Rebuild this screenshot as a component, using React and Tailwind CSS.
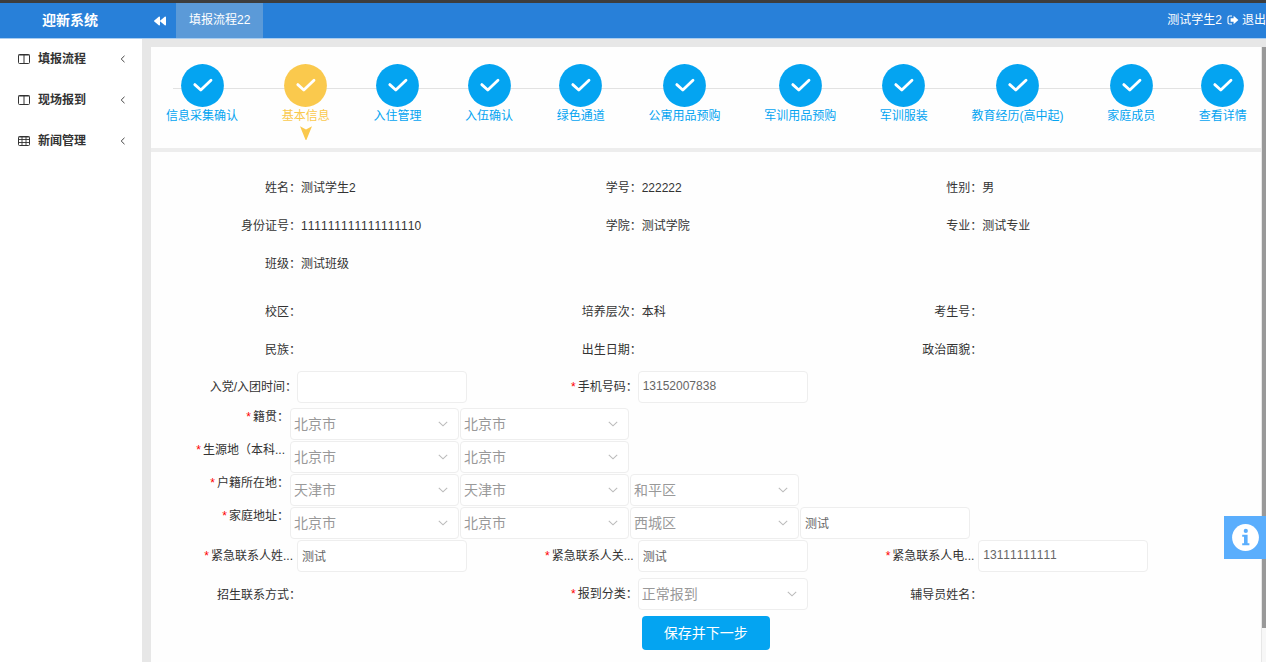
import { FaBackward } from "react-icons/fa";

const MENU = [
  { title: "填报流程", icon: ColumnsIcon },
  { title: "现场报到", icon: ColumnsIcon },
  { title: "新闻管理", icon: TableIcon },
];

const STEPS = [
  "信息采集确认",
  "基本信息",
  "入住管理",
  "入伍确认",
  "绿色通道",
  "公寓用品预购",
  "军训用品预购",
  "军训服装",
  "教育经历(高中起)",
  "家庭成员",
  "查看详情",
];
const CURRENT_STEP = 1;

const BASIC_INFO = [
  ["姓名", "测试学生2"],
  ["学号", "222222"],
  ["性别", "男"],
  ["身份证号", "111111111111111110"],
  ["学院", "测试学院"],
  ["专业", "测试专业"],
  ["班级", "测试班级"],
];

const EXTRA_INFO = [
  ["校区", ""],
  ["培养层次", "本科"],
  ["考生号", ""],
  ["民族", ""],
  ["出生日期", ""],
  ["政治面貌", ""],
];

const REGIONS = [
  { id: "native", label: "籍贯：", values: ["北京市", "北京市"] },
  { id: "origin", label: "生源地（本科...", values: ["北京市", "北京市"], cut: true },
  { id: "household", label: "户籍所在地：", values: ["天津市", "天津市", "和平区"] },
  { id: "home", label: "家庭地址：", values: ["北京市", "北京市", "西城区"], detail: "测试" },
];

function ColumnsIcon() {
  return (
    <svg viewBox="0 0 12 12" className="h-3 w-3 shrink-0" fill="none" stroke="#333" aria-hidden="true">
      <rect x="0.5" y="1.5" width="11" height="9" rx="1" />
      <path d="M0.5 2h11M6 1.5v9" />
    </svg>
  );
}

function TableIcon() {
  return (
    <svg viewBox="0 0 12 12" className="h-3 w-3 shrink-0" fill="none" stroke="#333" aria-hidden="true">
      <rect x="0.5" y="1.5" width="11" height="9" rx="1" />
      <path d="M0.5 2h11M0.5 4.5h11M0.5 7.5h11M4 1.5v9M8 1.5v9" strokeWidth="0.9" />
    </svg>
  );
}

function SignOutIcon() {
  return (
    <svg viewBox="0 0 12 12" className="h-3 w-3" aria-hidden="true">
      <path d="M5 2H2.6Q1 2 1 3.6v4.8Q1 10 2.6 10H5" fill="none" stroke="#fff" strokeWidth="1.1" />
      <path d="M3.6 4.2h3V1.8L11.4 6l-4.8 4.2V7.8h-3z" fill="#fff" />
    </svg>
  );
}

function InfoIcon() {
  return (
    <svg viewBox="0 0 27 27" className="h-[27px] w-[27px]" aria-hidden="true">
      <circle cx="13.5" cy="13.5" r="13.4" fill="#fff" />
      <circle cx="13.8" cy="6.9" r="2.1" fill="#5aaefd" />
      <path d="M10.2 10.8h5.4v8.4h1.8v2h-7.2v-2H12v-6.4h-1.8z" fill="#5aaefd" />
    </svg>
  );
}

function Header() {
  return (
    <header className="flex h-[39px] shrink-0 items-stretch border-t-3 border-b border-t-[#3d3d3d] border-b-[#a9cdf0] bg-[#2880d9] text-xs text-white">
      <h1 className="flex w-[140px] items-center justify-center pb-0.5 text-sm font-bold">迎新系统</h1>
      <button type="button" aria-label="收起菜单" className="flex w-9 items-center justify-center pl-1">
        <FaBackward className="h-3 w-3" />
      </button>
      <a href="#flow" className="flex items-center bg-[#5b9ad8] px-[13px] pb-0.5">
        填报流程22
      </a>
      <div className="ml-auto flex items-center gap-[5px] pb-0.5 whitespace-nowrap">
        <span>测试学生2</span>
        <a href="#logout" className="flex items-center gap-[3px]">
          <SignOutIcon />
          退出
        </a>
      </div>
    </header>
  );
}

function Sidebar() {
  return (
    <nav className="w-[142px] shrink-0 bg-white">
      {MENU.map(({ title, icon: Icon }) => (
        <button
          key={title}
          type="button"
          className="flex h-[41px] w-full items-center gap-2 pr-4 pb-0.5 pl-[18px] text-xs font-bold text-[#333]"
        >
          <Icon />
          {title}
          <svg viewBox="0 0 6 8" className="ml-auto h-2 w-1.5" fill="none" stroke="#444" aria-hidden="true">
            <path d="M4.5 0.8L1.2 4l3.3 3.2" />
          </svg>
        </button>
      ))}
    </nav>
  );
}

function Steps() {
  return (
    <section className="relative h-[101px] bg-[#fefefe] pt-[17px]">
      <div className="absolute top-[41px] right-[60px] left-[22px] h-px bg-[#e2e2e2]" />
      <ol className="relative flex justify-between pr-[14px] pl-[15px]">
        {STEPS.map((step, i) => {
          const current = i === CURRENT_STEP;
          return (
            <li key={step} className={`flex flex-col items-center ${current ? "text-[#fac94d]" : "text-[#04a4f1]"}`}>
              <svg viewBox="0 0 43 43" className="h-[43px] w-[43px]" aria-hidden="true">
                <circle cx="21.5" cy="21.5" r="21.4" fill="currentColor" />
                <path
                  d="M13.8 20.6l6 5.4L30 16.2"
                  fill="none"
                  stroke="#fff"
                  strokeWidth="2.8"
                  strokeLinecap="round"
                  strokeLinejoin="round"
                />
              </svg>
              <a href="#step" className="text-xs leading-[18px] whitespace-nowrap">
                {step}
              </a>
              {current && (
                <svg viewBox="0 0 12 14" className="mt-px h-[14px] w-3" fill="currentColor" aria-hidden="true">
                  <path d="M0 0.3L6 3.6 12 0.3 6.4 14h-0.8z" />
                </svg>
              )}
            </li>
          );
        })}
      </ol>
    </section>
  );
}

function InfoGrid({ items, className = "" }) {
  return (
    <dl className={`grid grid-cols-3 ${className}`}>
      {items.map(([name, value]) => (
        <div key={name} className="flex h-[38px] items-center">
          <dt className="w-[106px] text-right">{name}：</dt>
          <dd>{value}</dd>
        </div>
      ))}
    </dl>
  );
}

function FieldLabel({ htmlFor, required, cut, className, children }) {
  return (
    <label htmlFor={htmlFor} className={`shrink-0 text-right whitespace-nowrap ${cut ? "pr-1" : ""} ${className}`}>
      {required && <span className="mr-0.5 text-[#f00]">*</span>}
      {children}
    </label>
  );
}

function TextInput(props) {
  return (
    <input
      type="text"
      className="h-8 w-[170px] rounded border border-[#eee] bg-white px-1 pb-0.5 text-xs text-[#666] outline-none"
      {...props}
    />
  );
}

function Select({ id, value, label, className }) {
  return (
    <div className={`relative ${className}`}>
      <select
        id={id}
        aria-label={label}
        defaultValue={value}
        className="h-8 w-full appearance-none rounded border border-[#eee] bg-white px-[3px] text-sm text-[#999] outline-none"
      >
        <option>{value}</option>
      </select>
      <svg
        viewBox="0 0 10 6"
        className="pointer-events-none absolute top-[13px] right-[11px] h-1.5 w-2.5"
        fill="none"
        stroke="#bbb"
        strokeWidth="1.1"
        aria-hidden="true"
      >
        <path d="M0.8 0.8L5 4.8l4.2-4" />
      </svg>
    </div>
  );
}

function Field({ id, label, value, required, cut }) {
  return (
    <div className="flex items-center">
      <FieldLabel htmlFor={id} required={required} cut={cut} className="w-[102px]">
        {label}
      </FieldLabel>
      <TextInput id={id} defaultValue={value} />
    </div>
  );
}

function RegionRow({ id, label, values, detail, cut }) {
  return (
    <div className="flex items-start gap-px">
      <FieldLabel htmlFor={`${id}-0`} required cut={cut} className="w-[94px] leading-[18px]">
        {label}
      </FieldLabel>
      <div className="flex gap-px">
        {values.map((value, i) => (
          <Select key={i} id={`${id}-${i}`} label={i > 0 ? label : undefined} value={value} className="w-[169px]" />
        ))}
        {detail && <TextInput aria-label="详细地址" defaultValue={detail} />}
      </div>
    </div>
  );
}

function BasicForm() {
  return (
    <form className="flex-1 bg-[#fefefe] px-11 pt-[17px] text-xs text-[#333]" onSubmit={(e) => e.preventDefault()}>
      <InfoGrid items={BASIC_INFO} />
      <InfoGrid items={EXTRA_INFO} className="mt-2.5" />
      <div className="mt-0.5 grid grid-cols-3">
        <Field id="join-date" label="入党/入团时间：" value="" />
        <Field id="mobile" label="手机号码：" value="13152007838" required />
      </div>
      <div className="mt-[5px] flex flex-col gap-px">
        {REGIONS.map((region) => (
          <RegionRow key={region.id} {...region} />
        ))}
      </div>
      <div className="mt-px grid grid-cols-3">
        <Field id="contact-name" label="紧急联系人姓..." value="测试" required cut />
        <Field id="contact-relation" label="紧急联系人关..." value="测试" required cut />
        <Field id="contact-phone" label="紧急联系人电..." value="13111111111" required cut />
      </div>
      <div className="mt-1.5 grid grid-cols-3 items-center">
        <span className="w-[106px] pt-0.5 text-right">招生联系方式：</span>
        <div className="flex items-center">
          <FieldLabel htmlFor="category" required className="w-[102px]">
            报到分类：
          </FieldLabel>
          <Select id="category" value="正常报到" className="w-[170px]" />
        </div>
        <span className="w-[106px] pt-0.5 text-right">辅导员姓名：</span>
      </div>
      <div className="mt-1.5 grid grid-cols-3">
        <div className="col-start-2 pl-[106px]">
          <button type="submit" className="h-[34px] w-32 rounded bg-[#04a4f1] text-sm text-white">
            保存并下一步
          </button>
        </div>
      </div>
    </form>
  );
}

export default function App() {
  return (
    <div className="flex h-screen flex-col overflow-hidden font-['Liberation_Sans','Noto_Sans_CJK_SC',sans-serif] [font-kerning:none]">
      <Header />
      <div className="flex min-h-0 flex-1">
        <Sidebar />
        <main className="flex min-w-0 flex-1 bg-[#e7e7e7] pt-2 pl-[9px]">
          <div className="flex min-w-0 flex-1 flex-col gap-1 bg-[#ededed]">
            <Steps />
            <BasicForm />
          </div>
          <div className="flex w-[5px] flex-col border-l border-[#e7e7e7] bg-[#f7f7f7]">
            <div className="mb-[34px] flex-1 bg-[#999]" />
          </div>
        </main>
      </div>
      <button
        type="button"
        aria-label="帮助"
        className="fixed right-0 bottom-[103px] flex h-[43px] w-[42px] items-center justify-center bg-[#5aaefd]"
      >
        <InfoIcon />
      </button>
    </div>
  );
}
